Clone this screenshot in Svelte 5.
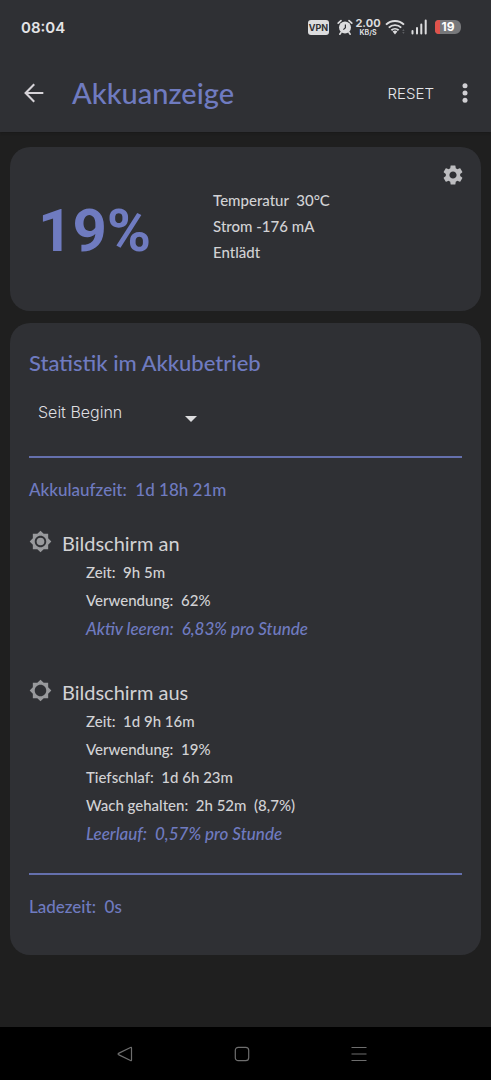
<script lang="ts">
  type Row = { label: string; value: string; rate?: boolean };
  type Section = { title: string; on: boolean; rows: Row[] };

  const level = 19;

  const info = ["Temperatur  30°C", "Strom -176 mA", "Entlädt"];

  const ranges = ["Seit Beginn", "Seit Entladen"];
  let range = $state(ranges[0]);

  const sections: Section[] = [
    {
      title: "Bildschirm an",
      on: true,
      rows: [
        { label: "Zeit", value: "9h 5m" },
        { label: "Verwendung", value: "62%" },
        { label: "Aktiv leeren", value: "6,83% pro Stunde", rate: true },
      ],
    },
    {
      title: "Bildschirm aus",
      on: false,
      rows: [
        { label: "Zeit", value: "1d 9h 16m" },
        { label: "Verwendung", value: "19%" },
        { label: "Tiefschlaf", value: "1d 6h 23m" },
        { label: "Wach gehalten", value: "2h 52m  (8,7%)" },
        { label: "Leerlauf", value: "0,57% pro Stunde", rate: true },
      ],
    },
  ];
</script>

<div class="screen">
  <header>
    <div class="status-bar">
      <span class="clock">08:04</span>
      <div class="status-icons">
        <span class="vpn">VPN</span>
        <svg class="alarm" width="16" height="16" viewBox="0 0 16 16">
          <g fill="none" stroke="#dcdcde" stroke-width="1.6" stroke-linecap="round">
            <path d="M1.2 4.2 4 1.6M14.8 4.2 12 1.6M4 13.5l-1.2 1.7M12 13.5l1.2 1.7" />
          </g>
          <circle cx="8" cy="8.6" r="6" fill="#dcdcde" />
          <path d="M8.4 5.6v3.2L6.4 10.6" fill="none" stroke="#2f3034" stroke-width="1.2" />
        </svg>
        <span class="speed"><b>2.00</b><small>KB/S</small></span>
        <svg class="wifi" width="20" height="16" viewBox="0 0 20 16">
          <g fill="none" stroke="#dcdcde" stroke-width="1.9">
            <path d="M1 5.6a13 13 0 0 1 18 0" />
            <path d="M3.8 8.6a9 9 0 0 1 12.4 0" />
            <path d="M6.4 11.3a5.2 5.2 0 0 1 7.2 0" />
          </g>
          <path d="M7.6 12.6a3.6 3.6 0 0 1 4.8 0L10 15.4z" fill="#dcdcde" />
          <path d="M17.2 11.8 18.4 10.2 19.6 11.8zM17.2 13.2 18.4 14.8 19.6 13.2z" fill="#6b6c70" />
        </svg>
        <svg class="signal" width="16" height="16" viewBox="0 0 16 16" stroke="#dcdcde" stroke-width="2" stroke-linecap="round">
          <path d="M1.5 12v2.5M6 9v5.5M10.3 5.5v9M14.7 1.5v13" />
        </svg>
        <span class="battery">
          <span class="battery-fill" style="width: {level}%"></span>
          <span class="battery-text">{level}</span>
        </span>
      </div>
    </div>

    <div class="app-bar">
      <button class="icon-btn" aria-label="Zurück">
        <svg width="28" height="28" viewBox="0 0 24 24" fill="none" stroke="#d6d3d8" stroke-width="1.8">
          <path d="M20 12H5.2M12.2 4.6 4.8 12l7.4 7.4" />
        </svg>
      </button>
      <h1>Akkuanzeige</h1>
      <button class="reset">RESET</button>
      <button class="icon-btn" aria-label="Mehr">
        <svg width="10" height="22" viewBox="0 0 10 22" fill="#d0cfd3">
          <circle cx="5" cy="3.8" r="2.5" />
          <circle cx="5" cy="11" r="2.5" />
          <circle cx="5" cy="18.2" r="2.5" />
        </svg>
      </button>
    </div>
  </header>

  <main>
    <section class="card summary">
      <div class="level">{level}%</div>
      <div class="info">
        {#each info as line}
          <div>{line}</div>
        {/each}
      </div>
      <button class="icon-btn" aria-label="Einstellungen">
        <svg width="24" height="24" viewBox="0 0 24 24" fill="#bdbdc0">
          <path d="M19.14 12.94c.04-.3.06-.61.06-.94 0-.32-.02-.64-.07-.94l2.03-1.58c.18-.14.23-.41.12-.61l-1.92-3.32c-.12-.22-.37-.29-.59-.22l-2.39.96c-.5-.38-1.03-.7-1.62-.94l-.36-2.54c-.04-.24-.24-.41-.48-.41h-3.84c-.24 0-.43.17-.47.41l-.36 2.54c-.59.24-1.13.57-1.62.94l-2.39-.96c-.22-.08-.47 0-.59.22L2.74 8.87c-.12.21-.08.47.12.61l2.03 1.58c-.05.3-.09.63-.09.94s.02.64.07.94l-2.03 1.58c-.18.14-.23.41-.12.61l1.92 3.32c.12.22.37.29.59.22l2.39-.96c.5.38 1.03.7 1.62.94l.36 2.54c.05.24.24.41.48.41h3.84c.24 0 .44-.17.47-.41l.36-2.54c.59-.24 1.13-.56 1.62-.94l2.39.96c.22.08.47 0 .59-.22l1.92-3.32c.12-.22.07-.47-.12-.61l-2.01-1.58zM12 15.6c-1.98 0-3.6-1.62-3.6-3.6s1.62-3.6 3.6-3.6 3.6 1.62 3.6 3.6-1.62 3.6-3.6 3.6z" />
        </svg>
      </button>
    </section>

    <section class="card stats">
      <h2 id="stats-title">Statistik im Akkubetrieb</h2>
      <div class="picker">
        <select bind:value={range} aria-labelledby="stats-title">
          {#each ranges as r}
            <option>{r}</option>
          {/each}
        </select>
        <svg width="12" height="6" viewBox="0 0 12 6" fill="#dcdcde"><path d="M0 0h12L6 6z" /></svg>
      </div>

      <hr />
      <p class="total">Akkulaufzeit:  1d 18h 21m</p>

      {#each sections as s (s.title)}
        <div class="group">
          <h3>
            <svg width="23" height="23" viewBox="0 0 24 24" fill="#98999c">
              <path d="M20 8.69V4h-4.69L12 .69 8.69 4H4v4.69L.69 12 4 15.31V20h4.69L12 23.31 15.31 20H20v-4.69L23.31 12 20 8.69zM12 18c-3.31 0-6-2.69-6-6s2.69-6 6-6 6 2.69 6 6-2.69 6-6 6z" />
              {#if s.on}
                <circle cx="12" cy="12" r="4" />
              {/if}
            </svg>
            {s.title}
          </h3>
          <ul>
            {#each s.rows as row}
              <li class:rate={row.rate}>{row.label}:  {row.value}</li>
            {/each}
          </ul>
        </div>
      {/each}

      <hr />
      <p class="total">Ladezeit:  0s</p>
    </section>
  </main>

  <nav>
    <button class="icon-btn" aria-label="Zurück">
      <svg width="16" height="16" viewBox="0 0 16 16"><path d="M14.5 2v12q0 1-1 .5L1.5 8.6q-1-.6 0-1.2l12-5.9q1-.5 1 .5z" /></svg>
    </button>
    <button class="icon-btn" aria-label="Startseite">
      <svg width="16" height="16" viewBox="0 0 16 16"><rect x="1.3" y="1.3" width="13.4" height="13.4" rx="3" /></svg>
    </button>
    <button class="icon-btn" aria-label="Übersicht">
      <svg width="16" height="16" viewBox="0 0 16 16"><path d="M.5 1.5h15M.5 8h15M.5 14.5h15" /></svg>
    </button>
  </nav>
</div>

<style>
  :global(body) {
    background: #1f1f1f;
  }
  .screen {
    display: flex;
    flex-direction: column;
    min-height: 100vh;
    color: #d2d2d4;
    font-family: Lato, "Liberation Sans", sans-serif;
    font-weight: 500;
  }
  header {
    background: #2f3034;
    box-shadow: 0 1px 2px #1a1a1a;
  }
  h1, h2, h3, p, ul {
    margin: 0;
    padding: 0;
    font-weight: 500;
  }
  button {
    border: none;
    padding: 0;
    background: none;
    color: inherit;
    cursor: pointer;
  }
  .icon-btn {
    display: flex;
    align-items: center;
    justify-content: center;
  }

  /* status bar */
  .status-bar {
    display: flex;
    align-items: center;
    justify-content: space-between;
    height: 54px;
    padding: 0 30px 0 21px;
    font-family: Inter, "Liberation Sans", sans-serif;
  }
  .clock {
    font-size: 15px;
    font-weight: 600;
    color: #e4e4e6;
  }
  .status-icons {
    display: flex;
    align-items: center;
  }
  .vpn {
    width: 21px;
    margin-right: 8px;
    border-radius: 3px;
    background: #dcdcde;
    color: #2f3034;
    font-size: 9px;
    font-weight: 700;
    line-height: 15px;
    text-align: center;
  }
  .alarm { margin-right: 3px; }
  .speed {
    display: flex;
    flex-direction: column;
    align-items: center;
    width: 24px;
    margin-right: 5px;
    color: #dcdcde;
  }
  .speed b {
    font-size: 11px;
    font-weight: 700;
    line-height: 12px;
  }
  .speed small {
    font-size: 7px;
    font-weight: 700;
    line-height: 8px;
  }
  .wifi { margin-right: 6px; }
  .signal { margin-right: 8px; }
  .battery {
    position: relative;
    width: 26px;
    height: 14px;
    border-radius: 4px 6px 6px 4px;
    background: #77787b;
    overflow: hidden;
  }
  .battery-fill {
    position: absolute;
    inset: 0 auto 0 0;
    background: #e0524b;
  }
  .battery-text {
    position: absolute;
    inset: 0;
    color: #fff;
    font-size: 12px;
    font-weight: 700;
    line-height: 14px;
    text-align: center;
  }

  /* app bar */
  .app-bar {
    display: flex;
    align-items: center;
    height: 78px;
    padding: 0 21px 0 20px;
  }
  h1 {
    flex: 1;
    margin-left: 24px;
    color: #6f7bc0;
    font-size: 29px;
    line-height: 40px;
  }
  .reset {
    margin-right: 26px;
    color: #e6e6ea;
    font-family: Inter, "Liberation Sans", sans-serif;
    font-size: 15px;
    font-weight: 300;
  }

  /* cards */
  main {
    flex: 1;
    display: flex;
    flex-direction: column;
    gap: 12px;
    padding: 15px 10px;
  }
  .card {
    border-radius: 20px;
    background: #2f3034;
  }
  .summary {
    display: grid;
    grid-template-columns: 4fr 5fr auto;
    align-items: start;
    padding: 16px 16px 16px 28px;
    min-height: 132px;
  }
  .level {
    margin-top: 32px;
    color: #6f7bc0;
    font-family: Roboto, "Liberation Sans", sans-serif;
    font-size: 60px;
    font-weight: 700;
    line-height: 72px;
  }
  .info {
    margin: 24px 0 0 -4px;
    font-size: 15px;
    line-height: 26px;
    white-space: pre;
  }
  .stats {
    padding: 24px 19px 36px;
  }
  h2 {
    color: #6f7bc0;
    font-size: 22px;
    line-height: 32px;
  }
  .picker {
    display: grid;
    align-items: center;
    width: 180px;
    margin: 13px 0 24px;
  }
  .picker > * { grid-area: 1 / 1; }
  .picker svg {
    justify-self: end;
    margin: 14px 12px 0 0;
    pointer-events: none;
  }
  select {
    appearance: none;
    height: 40px;
    padding: 0 9px;
    border: none;
    background: transparent;
    color: #dedee0;
    font-family: Inter, "Liberation Sans", sans-serif;
    font-size: 16px;
    font-weight: 300;
  }
  option { background: #2f3034; }
  hr {
    height: 2px;
    margin: 0;
    border: none;
    background: #6570ad;
  }
  .total {
    margin-top: 20px;
    color: #6f7bc0;
    font-size: 17px;
    line-height: 24px;
    white-space: pre;
  }
  .group { margin: 26px 0 24px; }
  .group + .group { margin-top: 33px; }
  h3 {
    display: flex;
    align-items: center;
    gap: 10px;
    font-size: 20px;
    font-weight: 400;
    line-height: 30px;
  }
  h3 svg { margin-bottom: 4px; }
  ul {
    padding-left: 57px;
    list-style: none;
    font-size: 15px;
    line-height: 28px;
    white-space: pre;
  }
  .rate {
    color: #6f7bc0;
    font-size: 17px;
    font-style: italic;
    line-height: 30px;
  }

  /* system navigation */
  nav {
    display: flex;
    justify-content: center;
    gap: 101px;
    height: 53px;
    padding-right: 8px;
    background: #000;
  }
  nav svg {
    fill: none;
    stroke: #6e6e6e;
    stroke-width: 1.2;
  }
</style>
